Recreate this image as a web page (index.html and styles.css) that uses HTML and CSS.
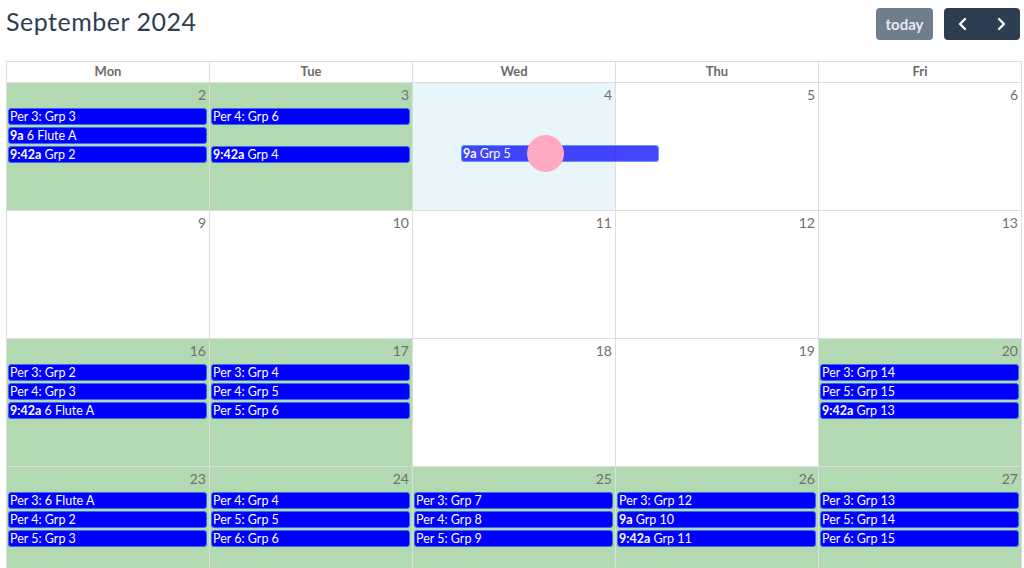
FILE: index.html
```html
<!DOCTYPE html>
<html>
<head>
<meta charset="utf-8">
<link rel="stylesheet" href="styles.css">
</head>
<body>
<div class="app">
  <div class="toolbar">
    <h2 class="title">September 2024</h2>
    <div class="actions">
      <button class="btn btn-today">today</button>
      <div class="btn-group">
        <button class="btn btn-nav"><svg width="12" height="14" viewBox="0 0 12 14"><path d="M8 2 L3 7 L8 12" fill="none" stroke="#fff" stroke-width="2.4" stroke-linecap="round" stroke-linejoin="round"/></svg></button>
        <button class="btn btn-nav"><svg width="12" height="14" viewBox="0 0 12 14"><path d="M4 2 L9 7 L4 12" fill="none" stroke="#fff" stroke-width="2.4" stroke-linecap="round" stroke-linejoin="round"/></svg></button>
      </div>
    </div>
  </div>

  <div class="cal">
    <div class="head">Mon</div>
    <div class="head">Tue</div>
    <div class="head">Wed</div>
    <div class="head">Thu</div>
    <div class="head">Fri</div>

    <!-- week 1 -->
    <div class="day green"><div class="num">2</div>
      <div class="ev">Per 3: Grp 3</div>
      <div class="ev"><b>9a</b> 6 Flute A</div>
      <div class="ev"><b>9:42a</b> Grp 2</div>
    </div>
    <div class="day green"><div class="num">3</div>
      <div class="ev">Per 4: Grp 6</div>
      <div class="ev-gap"></div>
      <div class="ev"><b>9:42a</b> Grp 4</div>
    </div>
    <div class="day hover"><div class="num">4</div></div>
    <div class="day"><div class="num">5</div></div>
    <div class="day"><div class="num">6</div></div>

    <!-- week 2 -->
    <div class="day"><div class="num">9</div></div>
    <div class="day"><div class="num">10</div></div>
    <div class="day"><div class="num">11</div></div>
    <div class="day"><div class="num">12</div></div>
    <div class="day"><div class="num">13</div></div>

    <!-- week 3 -->
    <div class="day green"><div class="num">16</div>
      <div class="ev">Per 3: Grp 2</div>
      <div class="ev">Per 4: Grp 3</div>
      <div class="ev"><b>9:42a</b> 6 Flute A</div>
    </div>
    <div class="day green"><div class="num">17</div>
      <div class="ev">Per 3: Grp 4</div>
      <div class="ev">Per 4: Grp 5</div>
      <div class="ev">Per 5: Grp 6</div>
    </div>
    <div class="day"><div class="num">18</div></div>
    <div class="day"><div class="num">19</div></div>
    <div class="day green"><div class="num">20</div>
      <div class="ev">Per 3: Grp 14</div>
      <div class="ev">Per 5: Grp 15</div>
      <div class="ev"><b>9:42a</b> Grp 13</div>
    </div>

    <!-- week 4 -->
    <div class="day green"><div class="num">23</div>
      <div class="ev">Per 3: 6 Flute A</div>
      <div class="ev">Per 4: Grp 2</div>
      <div class="ev">Per 5: Grp 3</div>
    </div>
    <div class="day green"><div class="num">24</div>
      <div class="ev">Per 4: Grp 4</div>
      <div class="ev">Per 5: Grp 5</div>
      <div class="ev">Per 6: Grp 6</div>
    </div>
    <div class="day green"><div class="num">25</div>
      <div class="ev">Per 3: Grp 7</div>
      <div class="ev">Per 4: Grp 8</div>
      <div class="ev">Per 5: Grp 9</div>
    </div>
    <div class="day green"><div class="num">26</div>
      <div class="ev">Per 3: Grp 12</div>
      <div class="ev"><b>9a</b> Grp 10</div>
      <div class="ev"><b>9:42a</b> Grp 11</div>
    </div>
    <div class="day green"><div class="num">27</div>
      <div class="ev">Per 3: Grp 13</div>
      <div class="ev">Per 5: Grp 14</div>
      <div class="ev">Per 6: Grp 15</div>
    </div>
  </div>

  <div class="drag-mirror"><b>9a</b> Grp 5</div>
  <div class="drag-dot"></div>
</div>
</body>
</html>
```

FILE: styles.css
```css
html, body {
  margin: 0;
  padding: 0;
  height: 100%;
  overflow: hidden;
  background: #fff;
}

body {
  font-family: Lato, "Open Sans", "Liberation Sans", sans-serif;
}

.app {
  position: relative;
  padding: 8px 2px 0 6px;
}

.toolbar {
  display: flex;
  justify-content: space-between;
  align-items: center;
  height: 32px;
  margin-bottom: 21px;
}

.title {
  margin: 0;
  font-size: 25px;
  font-weight: 400;
  color: #2c3e50;
  letter-spacing: 0.5px;
  position: relative;
  top: -3px;
}

.actions {
  display: flex;
  gap: 11px;
  margin-right: 2px;
}

.btn {
  border: none;
  border-radius: 4px;
  height: 32px;
  color: #fff;
  font-family: inherit;
  font-size: 15px;
  font-weight: 700;
  padding: 0;
  display: flex;
  align-items: center;
  justify-content: center;
}

.btn-today {
  width: 57px;
  background: #6f7d8c;
  color: #e7eaee;
}

.btn-group {
  display: flex;
  background: #2c3e50;
  border-radius: 4px;
}

.btn-nav {
  width: 38px;
  background: transparent;
}

.cal {
  display: grid;
  grid-template-columns: repeat(5, 1fr);
  grid-template-rows: 21px repeat(4, 128px);
  border-top: 1px solid #ddd;
  border-left: 1px solid #ddd;
}

.head {
  border-right: 1px solid #ddd;
  border-bottom: 1px solid #ddd;
  text-align: center;
  font-size: 13px;
  font-weight: 700;
  color: #6b6b6b;
  line-height: 19px;
}

.day {
  border-right: 1px solid #ddd;
  border-bottom: 1px solid #ddd;
  background: #fff;
  display: flex;
  flex-direction: column;
  padding: 0 2px 0 1px;
}

.day.green {
  background: #b3d9b3;
}

.day.hover {
  background: #e8f6fb;
}

.num {
  text-align: right;
  font-size: 14px;
  color: #707070;
  line-height: 18px;
  padding: 3px 1px 4px 0;
}

.ev {
  height: 17px;
  box-sizing: border-box;
  background: #0000ff;
  border: 1px solid #3a6fe0;
  border-radius: 3px;
  color: #fff;
  font-size: 12.5px;
  line-height: 15px;
  padding: 0 1px;
  margin-bottom: 2px;
  white-space: nowrap;
  overflow: hidden;
}

.ev b {
  font-weight: 700;
}

.ev-gap {
  height: 19px;
}

.drag-mirror {
  position: absolute;
  left: 461px;
  top: 145px;
  width: 198px;
  height: 17px;
  box-sizing: border-box;
  background: #0000ff;
  border: 1px solid #3a6fe0;
  border-radius: 3px;
  color: #fff;
  font-size: 12.5px;
  line-height: 15px;
  padding: 0 1px;
  opacity: 0.72;
}

.drag-dot {
  position: absolute;
  left: 527px;
  top: 135px;
  width: 37px;
  height: 37px;
  border-radius: 50%;
  background: #ffaac0;
}
```
